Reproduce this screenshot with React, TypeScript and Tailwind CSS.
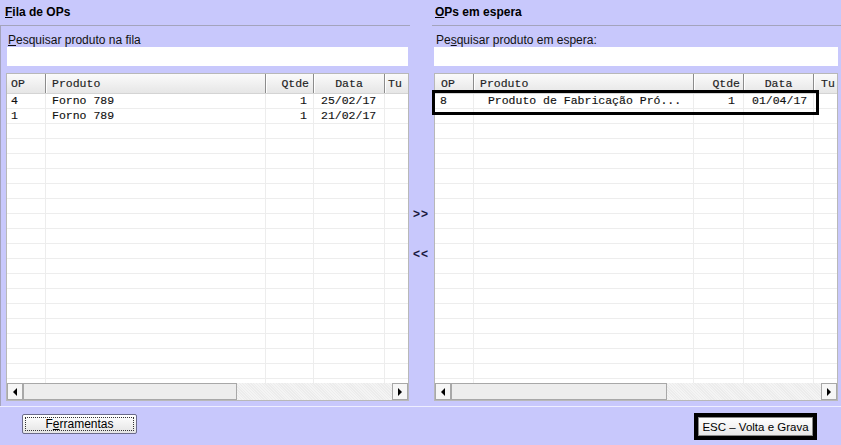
import React from "react";

const mono = "font-['Liberation_Mono','Courier_New',monospace] [-webkit-text-stroke:0.15px_currentColor]";

type Col = { w: string; hAlign: string; bAlign: string };

const leftCols: Col[] = [
  { w: "w-[39px]", hAlign: "justify-start pl-[4px]", bAlign: "justify-start pl-[4px]" },
  { w: "w-[220px]", hAlign: "justify-start pl-[6px]", bAlign: "justify-start pl-[6px]" },
  { w: "w-[48px]", hAlign: "justify-end pr-[4px]", bAlign: "justify-end pr-[6px]" },
  { w: "w-[71px]", hAlign: "justify-center", bAlign: "justify-start pl-[7px]" },
  { w: "w-[40px]", hAlign: "justify-start pl-[3px]", bAlign: "justify-start pl-[3px]" },
];

const rightCols: Col[] = [
  { w: "w-[39px]", hAlign: "justify-start pl-[6px]", bAlign: "justify-start pl-[5px]" },
  { w: "w-[220px]", hAlign: "justify-start pl-[6px]", bAlign: "justify-start pl-[7px]" },
  { w: "w-[50px]", hAlign: "justify-end pr-[3px]", bAlign: "justify-end pr-[8px]" },
  { w: "w-[70px]", hAlign: "justify-center", bAlign: "justify-start pl-[8px]" },
  { w: "w-[40px]", hAlign: "justify-start pl-[7px]", bAlign: "justify-start pl-[7px]" },
];

const headers = ["OP", "Produto", "Qtde", "Data", "Tu"];

function ScrollBar({ thumb }: { thumb: string }) {
  return (
    <div className="h-[17px] flex bg-[#f2f2f2] shrink-0">
      <div className="w-[16px] h-full border border-[#a8a8a8] bg-[#f6f6f6] flex items-center justify-center shrink-0">
        <div className="w-0 h-0 border-y-[4px] border-y-transparent border-r-[4px] border-r-black" />
      </div>
      <div className={`${thumb} h-full border border-[#a8a8a8] bg-[#ededed] shrink-0`} />
      <div className="flex-1 h-full bg-[repeating-linear-gradient(45deg,#f4f4f4_0px,#f4f4f4_1px,#ececec_1px,#ececec_2px)]" />
      <div className="w-[16px] h-full border border-[#a8a8a8] bg-[#f6f6f6] flex items-center justify-center shrink-0">
        <div className="w-0 h-0 border-y-[4px] border-y-transparent border-l-[4px] border-l-black" />
      </div>
    </div>
  );
}

function DataGrid({
  cols,
  rows,
  thumb,
  highlight,
}: {
  cols: Col[];
  rows: string[][];
  thumb: string;
  highlight?: boolean;
}) {
  const filler = Array.from({ length: 22 - rows.length }, () => ["", "", "", "", ""]);
  const all = [...rows, ...filler];
  return (
    <div className="relative flex-1 flex flex-col border border-[#b8b8b8] bg-white min-h-0">
      <div className="flex-1 overflow-hidden min-h-0">
        <div className={`flex h-[20px] bg-gradient-to-b from-[#fbfbfb] to-[#e6e6e6] border-b border-[#d4d4d4] ${mono} text-[11.5px] text-[#222]`}>
          {cols.map((c, i) => (
            <div
              key={i}
              className={`${c.w} shrink-0 h-full flex items-center pt-[1px] ${c.hAlign} border-r border-[#8c8c8c] shadow-[1px_0_0_#ffffff] whitespace-pre`}
            >
              {headers[i]}
            </div>
          ))}
        </div>
        {all.map((r, ri) => (
          <div key={ri} className={`flex h-[15px] border-b border-[#ededed] ${mono} text-[11.5px] text-[#111]`}>
            {cols.map((c, i) => (
              <div
                key={i}
                className={`${c.w} shrink-0 h-full flex items-center ${c.bAlign} border-r border-[#ededed] whitespace-pre overflow-hidden`}
              >
                {r[i]}
              </div>
            ))}
          </div>
        ))}
      </div>
      <ScrollBar thumb={thumb} />
      {highlight && (
        <div className="absolute left-[-3px] top-[16px] w-[387px] h-[25px] border-[3px] border-black pointer-events-none" />
      )}
    </div>
  );
}

export default function App() {
  return (
    <div className="w-[841px] h-[445px] bg-[#c8c8fc] flex flex-col font-['Liberation_Sans',Arial,sans-serif] text-[12px] text-black overflow-hidden">
      <div className="h-[406px] flex">
        {/* Left panel */}
        <div className="w-[410px] flex flex-col shrink-0">
          <div className="h-[25px] pl-[5px] pt-[5px] font-bold text-[12px] leading-[15px]">
            <span className="underline">F</span>ila de OPs
          </div>
          <div className="flex-1 flex flex-col border-t border-l border-[#a4a4bc] pl-[5px] pr-[1px] pt-[7px] pb-[5px] min-h-0">
            <div className="h-[14px] leading-[14px] pl-[2px] text-[#111]">
              <span className="underline">P</span>esquisar produto na fila
            </div>
            <div className="h-[19px] ml-[1px] mr-[1px] bg-white" />
            <div className="h-[7px]" />
            <DataGrid
              cols={leftCols}
              thumb="w-[214px]"
              rows={[
                ["4", "Forno 789", "1", "25/02/17", ""],
                ["1", "Forno 789", "1", "21/02/17", ""],
              ]}
            />
          </div>
        </div>

        {/* Middle */}
        <div className="w-[22px] shrink-0 flex flex-col items-center pt-[207px] font-bold text-[12px] text-[#1a1a40] leading-[14px]">
          <div className="tracking-[1px]">&gt;&gt;</div>
          <div className="h-[26px]" />
          <div className="tracking-[1px]">&lt;&lt;</div>
        </div>

        {/* Right panel */}
        <div className="flex-1 flex flex-col min-w-0">
          <div className="h-[25px] pl-[3px] pt-[5px] font-bold text-[12px] leading-[15px]">
            <span className="underline">O</span>Ps em espera
          </div>
          <div className="flex-1 flex flex-col border-t border-[#a4a4bc] pl-[2px] pr-[3px] pt-[7px] pb-[5px] min-h-0">
            <div className="h-[14px] leading-[14px] pl-[2px] text-[#111]">
              Pe<span className="underline">s</span>quisar produto em espera:
            </div>
            <div className="h-[19px] bg-white" />
            <div className="h-[7px]" />
            <DataGrid
              cols={rightCols}
              thumb="w-[216px]"
              highlight
              rows={[["8", " Produto de Fabricação Pró...", "1", "01/04/17", ""]]}
            />
          </div>
        </div>
      </div>

      {/* Bottom bar */}
      <div className="flex-1 border-t border-[#eeeeff] flex items-start justify-between pl-[22px] pr-[24px]">
        <button className="mt-[7px] w-[115px] h-[20px] bg-gradient-to-b from-[#ffffff] to-[#e4e4e4] border border-[#6b6b8a] rounded-[2px] flex items-center justify-center p-[2px]">
          <span className="w-full h-full border border-dotted border-[#333] flex items-center justify-center text-[12px] leading-[12px]">
            F<span className="underline">e</span>rramentas
          </span>
        </button>
        <div className="mt-[6px] w-[123px] h-[27px] bg-black p-[4px]">
          <div className="w-full h-full bg-gradient-to-b from-[#ffffff] to-[#e8e8e8] border border-[#888] flex items-center justify-center text-[11.5px] leading-[12px] whitespace-pre">
            ESC – Volta e Grava
          </div>
        </div>
      </div>
    </div>
  );
}
